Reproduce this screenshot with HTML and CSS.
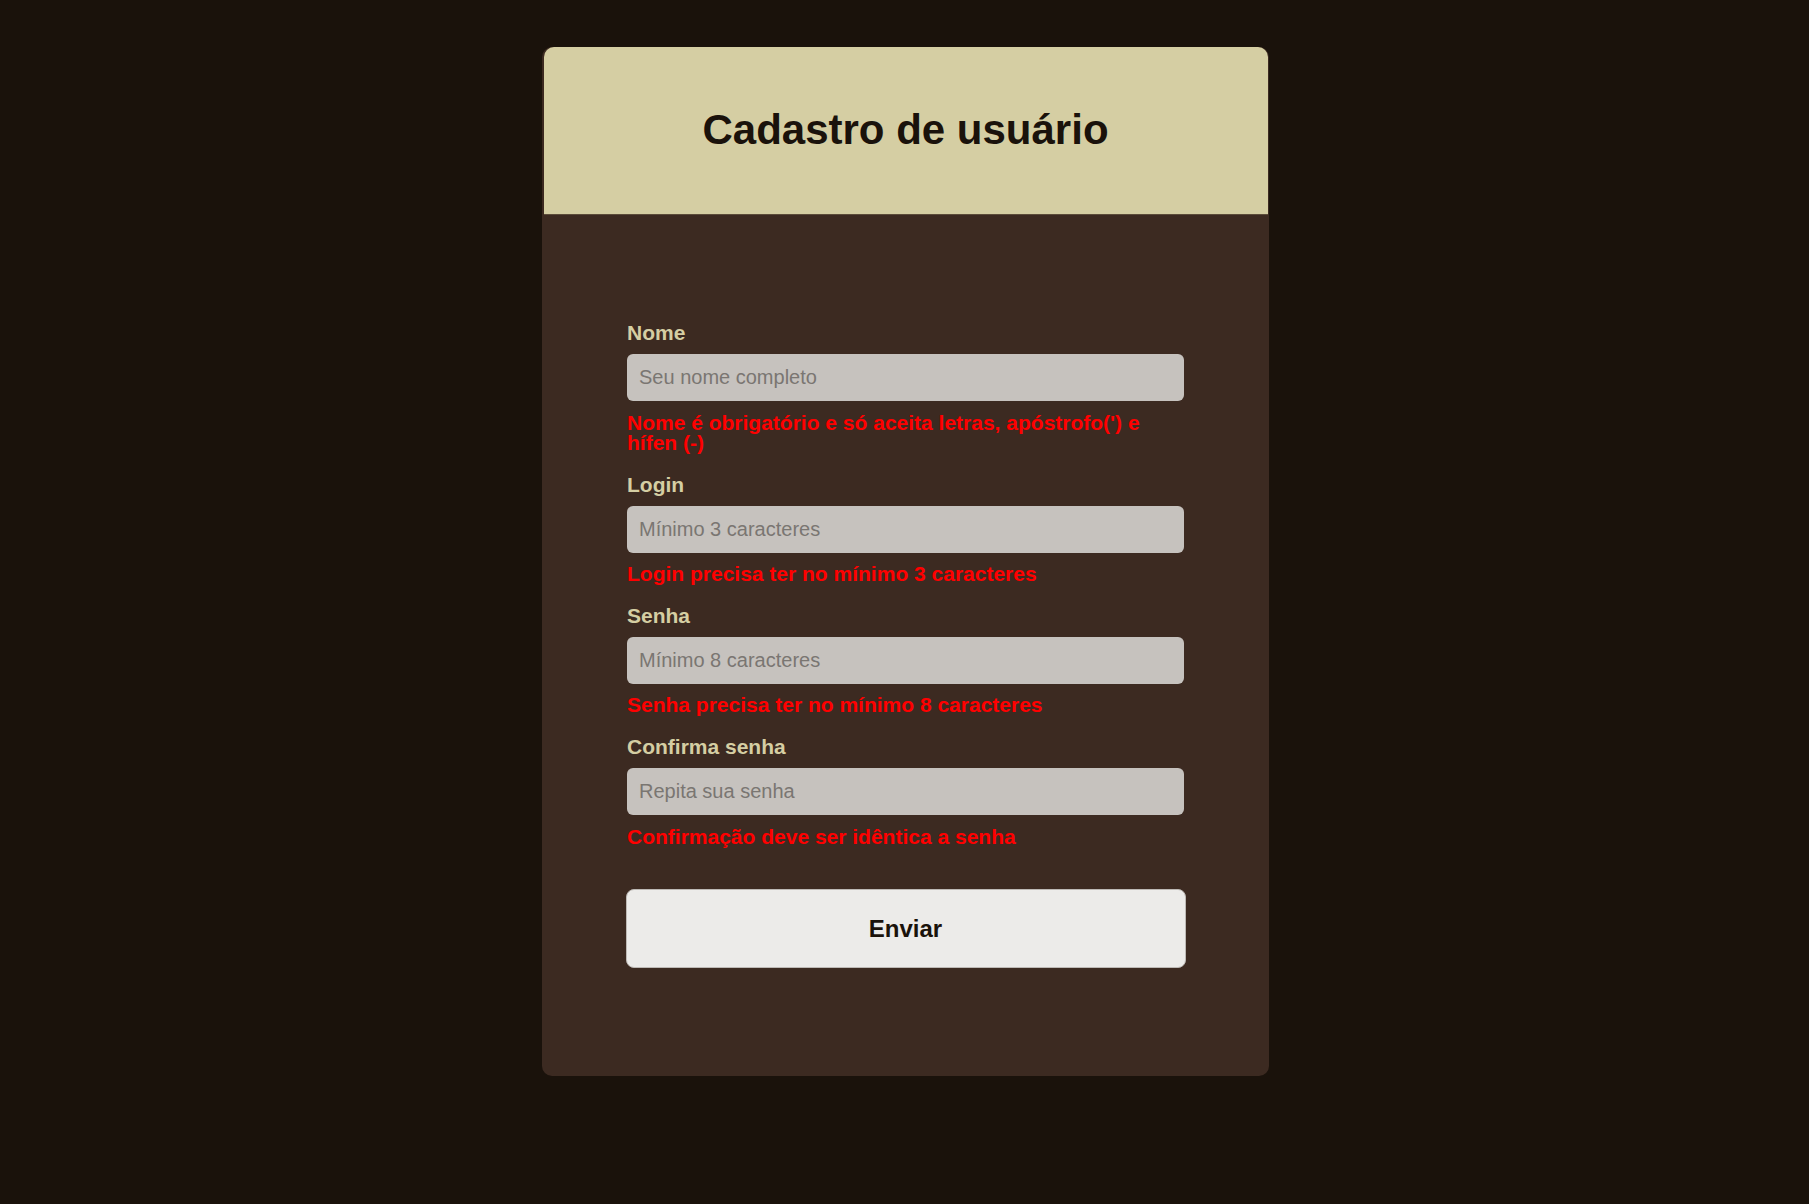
FILE: index.html
```html
<!DOCTYPE html>
<html lang="pt-BR">
<head>
<meta charset="UTF-8">
<title>Cadastro de usuário</title>
<link rel="stylesheet" href="styles.css">
</head>
<body>
<main class="card">
  <header class="card-header">
    <h1 class="title">Cadastro de usuário</h1>
  </header>
  <form class="form">
    <div class="field">
      <label class="label" for="nome">Nome</label>
      <input class="input" id="nome" type="text" placeholder="Seu nome completo">
      <p class="error">Nome é obrigatório e só aceita letras, apóstrofo(') e hífen (-)</p>
    </div>
    <div class="field">
      <label class="label" for="login">Login</label>
      <input class="input" id="login" type="text" placeholder="Mínimo 3 caracteres">
      <p class="error">Login precisa ter no mínimo 3 caracteres</p>
    </div>
    <div class="field">
      <label class="label" for="senha">Senha</label>
      <input class="input" id="senha" type="password" placeholder="Mínimo 8 caracteres">
      <p class="error">Senha precisa ter no mínimo 8 caracteres</p>
    </div>
    <div class="field">
      <label class="label" for="confirma">Confirma senha</label>
      <input class="input" id="confirma" type="password" placeholder="Repita sua senha">
      <p class="error">Confirmação deve ser idêntica a senha</p>
    </div>
    <button class="submit" type="button">Enviar</button>
  </form>
</main>
</body>
</html>
```
FILE: styles.css
```css
html, body {
  margin: 0;
  padding: 0;
  background: #1a120b;
  font-family: "Liberation Sans", Arial, sans-serif;
}

body {
  padding: 47px 0 0 2px;
  min-height: 1204px;
  box-sizing: border-box;
}

.card {
  width: 727px;
  margin: 0 auto;
  background: #3c2a21;
  border-radius: 10px;
}

.card-header {
  margin: 0 1.5px;
  height: 167px;
  background: #d5cea3;
  border-radius: 10px 10px 0 0;
  border-bottom: 1px solid #5c4c3a;
  display: flex;
  align-items: center;
  justify-content: center;
}

.title {
  margin: 0;
  font-size: 42px;
  font-weight: 700;
  color: #1a120b;
  line-height: 1;
  padding-bottom: 2px;
}

.form {
  display: flex;
  flex-direction: column;
  padding: 106px 85px 108px;
}

.field {
  display: flex;
  flex-direction: column;
  margin-bottom: 18.8px;
}

.label {
  font-size: 21px;
  line-height: 24px;
  font-weight: 700;
  color: #d5cea3;
}

.input {
  margin-top: 9px;
  height: 47px;
  box-sizing: border-box;
  border: none;
  border-radius: 6px;
  background: #c6c2be;
  padding: 0 12px;
  font-family: "Liberation Sans", Arial, sans-serif;
  font-size: 20px;
  color: #1a120b;
  outline: none;
}

.input::placeholder {
  color: #7a7672;
}

.error {
  margin: 11.5px 0 0;
  font-size: 21px;
  line-height: 20.8px;
  font-weight: 700;
  color: #ff0000;
}

.submit {
  margin: 23px -1.5px 0;
  height: 79px;
  border: 1px solid #bdb9b5;
  border-radius: 8px;
  background: #ecebe9;
  font-family: "Liberation Sans", Arial, sans-serif;
  font-size: 24px;
  font-weight: 700;
  color: #1a120b;
  cursor: pointer;
}
```
